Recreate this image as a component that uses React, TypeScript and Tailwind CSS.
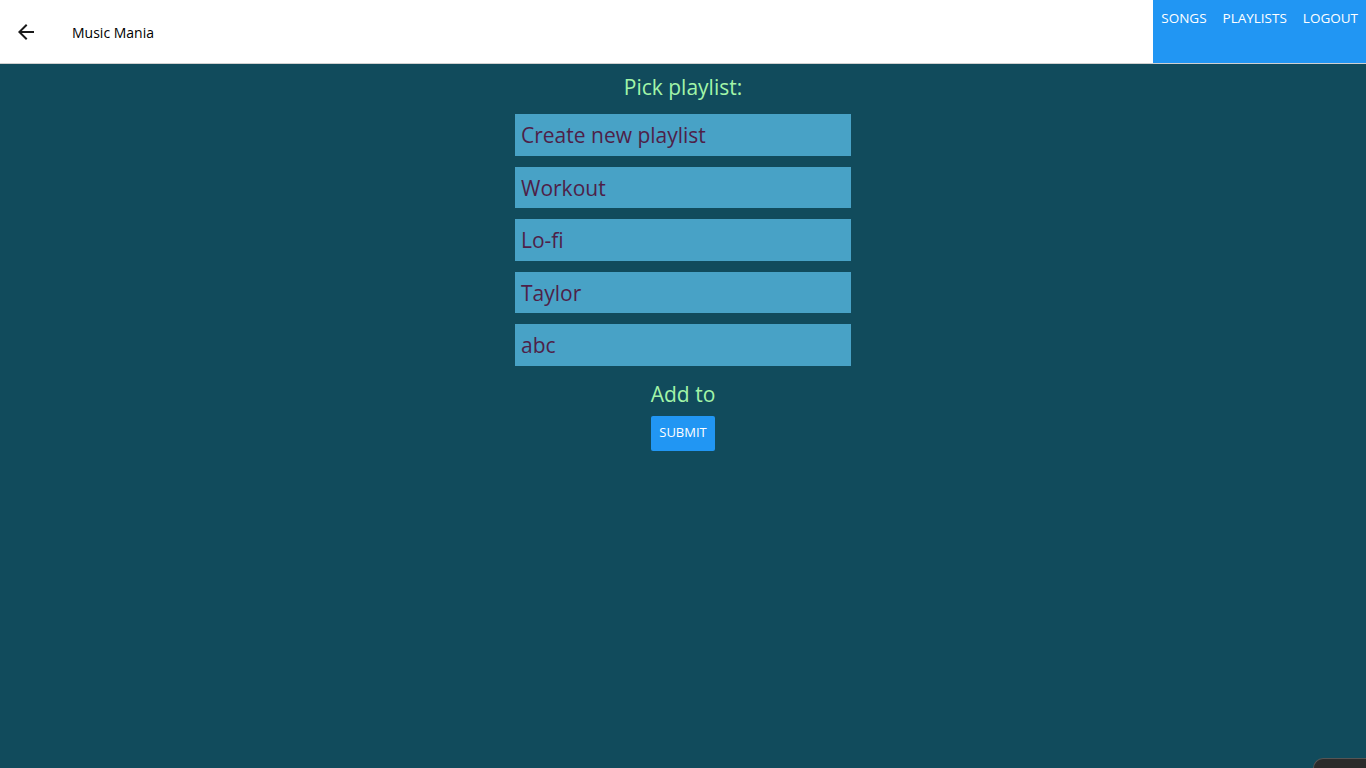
const playlists = ["Create new playlist", "Workout", "Lo-fi", "Taylor", "abc"];

export default function App() {
  return (
    <div
      className="min-h-screen flex flex-col bg-[#114b5c]"
      style={{ fontFamily: '"Open Sans", "Noto Sans", sans-serif' }}
    >
      {/* Top bar */}
      <header className="h-16 bg-white flex items-stretch border-b border-[#d0d0d0]">
        <div className="flex items-center pl-[14px] pt-[1px]">
          <svg viewBox="0 0 24 24" className="w-6 h-6 fill-[#1a1a1a]">
            <path d="M20 11H7.83l5.59-5.59L12 4l-8 8 8 8 1.41-1.41L7.83 13H20v-2z" />
          </svg>
          <span className="ml-[34px] text-[14px] text-black">Music Mania</span>
        </div>
        <nav className="ml-auto flex bg-[#2196f3]">
          {["SONGS", "PLAYLISTS", "LOGOUT"].map((n) => (
            <button
              key={n}
              className="px-2 pt-[8px] text-[13.5px] text-white self-start leading-[20px]"
            >
              {n}
            </button>
          ))}
        </nav>
      </header>

      {/* Content */}
      <main className="flex flex-col items-center">
        <h2 className="mt-[9px] text-[21px] leading-[28px] text-[#a2f5a8]">Pick playlist:</h2>
        <div className="mt-[13px] flex flex-col gap-[11px] w-[336px]">
          {playlists.map((p) => (
            <div
              key={p}
              className="h-[41.5px] bg-[#48a2c6] flex items-center px-[6px] pt-[2px] text-[21px] text-[#4e1f48]"
            >
              {p}
            </div>
          ))}
        </div>
        <p className="mt-[12px] text-[21px] leading-[32px] text-[#a2f5a8]">Add to</p>
        <button className="mt-[6px] h-[35px] px-[8px] rounded-[2px] bg-[#2196f3] text-white text-[13px]">
          SUBMIT
        </button>
      </main>

      <div className="fixed right-0 bottom-0 w-[53px] h-[10px] rounded-tl-[10px] bg-[#2b2b2b] border-t border-l border-[#555]" />
    </div>
  );
}
